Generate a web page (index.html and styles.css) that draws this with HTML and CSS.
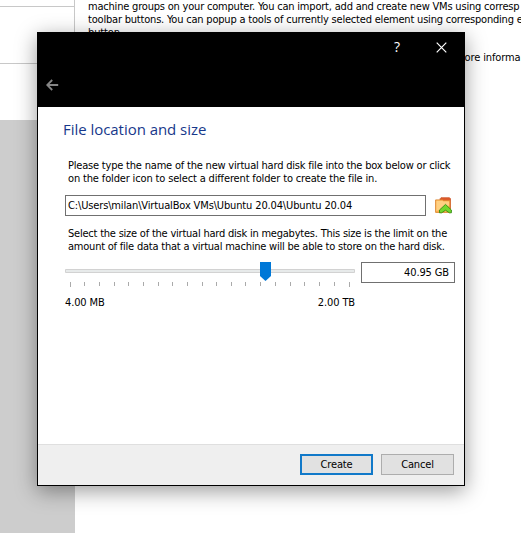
FILE: index.html
```html
<!DOCTYPE html>
<html lang="en">
<head>
<meta charset="utf-8">
<title>Create Virtual Hard Disk</title>
<link rel="stylesheet" href="styles.css">
</head>
<body>
<div class="manager">
  <aside class="sidebar">
    <div class="tool"></div>
    <div class="tool machine"></div>
    <div class="tool last"></div>
  </aside>
  <main class="welcome">
    <p><span class="tight">machine groups on your computer. You can import, add and create new VMs using corresp</span><br><span class="tight">toolbar buttons. You can popup a tools of currently selected element using corresponding e</span><br>button.</p>
    <p class="more">more informa</p>
  </main>
</div>
<section class="dialog">
  <header class="titlebar">
    <div class="controls">
      <span class="help">?</span>
      <svg class="close" width="11" height="11" viewBox="0 0 11 11"><path d="M.7.7l9.6 9.6M10.3.7L.7 10.3"/></svg>
    </div>
    <svg class="back" width="13" height="12" viewBox="0 0 13 12"><path d="M12.2 6H1.2M6.2 1L1.2 6l5 5"/></svg>
  </header>
  <div class="content">
    <h1>File location and size</h1>
    <p class="hint location"><span class="tight">Please type the name of the new virtual hard disk file into the box below or click</span><br><span class="snug">on the folder icon to select a different folder to create the file in.</span></p>
    <div class="file-row">
      <div class="field path">C:\Users\milan\VirtualBox VMs\Ubuntu 20.04\Ubuntu 20.04</div>
      <svg class="folder" width="17" height="17" viewBox="0 0 17 17">
        <path d="M5 3V1.8L6 .7h8.5l1 1V14H5z" fill="#df5b2b" stroke="#c94e20" stroke-width=".7"/>
        <path d="M.6 2.9h7l1 .6h6.3v11.9H.6z" fill="#fbb651" stroke="#dc8631" stroke-width=".9"/>
        <path d="M1.4 3.8h6l1 .6h5.7v4.1L1.4 14z" fill="#ffd082"/>
        <path d="M10.5 7.4l5.9 5.6v2.8h-2.1l-3.8-2.6-3.8 2.6H4.5V13z" fill="#72d72c" stroke="#368d14" stroke-width=".9"/>
      </svg>
    </div>
    <p class="hint size">Select the size of the virtual hard disk in megabytes. This size is the limit on the<br>amount of file data that a virtual machine will be able to store on the hard disk.</p>
    <div class="size-row">
      <div class="slider">
        <svg width="290" height="26" viewBox="0 0 290 26">
          <path class="track" d="M.5 7.5h289v3H.5z"/>
          <path class="ticks" d="M5.5 20v5M19.5 20v4M34.5 20v4M49.5 20v4M63.5 20v4M78.5 20v4M93.5 20v4M107.5 20v4M122.5 20v4M137.5 20v4M151.5 20v4M166.5 20v4M180.5 20v4M195.5 20v4M210.5 20v4M225.5 20v4M239.5 20v4M254.5 20v4M269.5 20v4M284.5 20v5"/>
          <path class="thumb" d="M195 0h11v14l-5.5 5-5.5-5z"/>
        </svg>
        <div class="range"><span>4.00 MB</span><span>2.00 TB</span></div>
      </div>
      <div class="field amount">40.95 GB</div>
    </div>
  </div>
  <footer class="actions">
    <div class="button primary">Create</div>
    <div class="button">Cancel</div>
  </footer>
</section>
</body>
</html>
```
FILE: styles.css
```css
* { box-sizing: border-box; }
body {
  margin: 0;
  height: 533px;
  overflow: hidden;
  position: relative;
  background: #fff;
  color: #000;
  font: 11px/13px "DejaVu Sans Condensed", "DejaVu Sans", sans-serif;
  font-stretch: condensed;
  letter-spacing: -.12px;
}
p, h1 { margin: 0; font-weight: normal; white-space: nowrap; }
.tight { letter-spacing: -.2px; }
.snug { letter-spacing: -.15px; }
.manager { display: flex; height: 533px; }
.sidebar { width: 75px; flex: none; background: #cdcdcd; }
.tool { height: 7px; background: #fff; border-right: 1px solid #c8c8c8; border-bottom: 1px solid #c8c8c8; }
.machine { height: 57px; }
.last { height: 56px; border-bottom: 0; }
.welcome { flex: 1; min-width: 0; padding-left: 13px; }
.more { margin: 12px 0 0 367px; }
.dialog {
  position: absolute;
  left: 37px;
  top: 32px;
  width: 428px;
  height: 454px;
  display: flex;
  flex-direction: column;
  background: #fff;
  border: 1px solid #000;
  box-shadow: 0 5px 20px rgba(0,0,0,.4);
}
.titlebar { height: 74px; flex: none; background: #000; }
.controls { display: flex; justify-content: flex-end; align-items: center; height: 29px; padding-right: 17px; gap: 36px; color: #fff; }
.help { font: 14px/18px "Open Sans", sans-serif; margin-top: -1px; }
.close, .back { fill: none; stroke: #fff; stroke-width: 1.2; }
.back { display: block; margin: 17px 0 0 8px; stroke: #858585; stroke-width: 1.8; }
.content { flex: 1; padding: 12px 9px 0 27px; }
h1 { color: #17388b; font: 15px/20px "Open Sans", "Noto Sans", sans-serif; margin-left: -2px; letter-spacing: -.04px; }
.hint { padding-left: 3px; }
.location { margin-top: 20px; }
.file-row { display: flex; align-items: center; margin-top: 10px; }
.field { height: 21px; border: 1px solid #707070; line-height: 20px; padding: 0 2px; white-space: nowrap; }
.path { width: 361px; letter-spacing: -.14px; }
.folder { margin-left: 9px; }
.size { margin-top: 11px; letter-spacing: -.22px; }
.size-row { display: flex; gap: 6px; margin-top: 9px; }
.slider { width: 290px; }
.slider svg { display: block; }
.track { fill: #e7eaea; stroke: #d2d2d2; }
.ticks { stroke: #aaa; }
.thumb { fill: #0078d7; }
.range { display: flex; justify-content: space-between; margin-top: 8px; }
.amount { width: 94px; padding-right: 5px; text-align: right; }
.actions { height: 41px; display: flex; justify-content: flex-end; gap: 8px; padding: 9px 10px 0; background: #efefef; border-top: 1px solid #dfdfdf; }
.button { width: 73px; height: 21px; border: 1px solid #adadad; background: #e1e1e1; text-align: center; line-height: 20px; letter-spacing: -.15px; }
.primary { border: 2px solid #1179c9; line-height: 18px; }
```
